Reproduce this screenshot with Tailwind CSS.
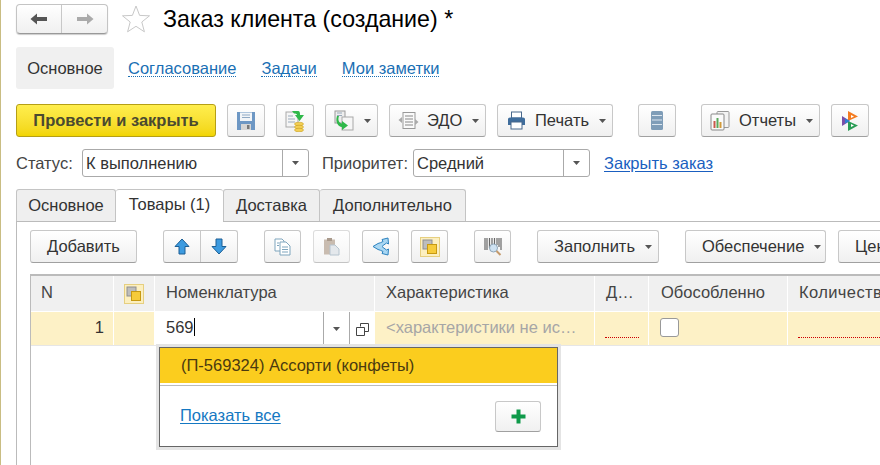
<!DOCTYPE html>
<html lang="ru">
<head>
  <meta charset="UTF-8" />
  <title>Заказ клиента (создание) *</title>
  <script src="https://cdn.jsdelivr.net/npm/@tailwindcss/browser@4"></script>
</head>
<body class="bg-white overflow-hidden">
  <div class="relative w-[880px] h-[465px] overflow-hidden border-l border-[#c9bd83] font-['Liberation_Sans',Arial,sans-serif] text-[16.5px] text-[#333]">

    <!-- header -->
    <div class="flex items-center h-[30px] mt-[4px] ml-[15px]">
      <div class="flex w-[92px] h-[30px] rounded-[4px] border border-[#c4c4c4] border-b-[#999] bg-linear-to-b from-white to-[#f0f0f0] shadow-[0_1px_1px_#ccc]">
        <div class="w-[45px] flex items-center justify-center border-r border-[#c8c8c8]">
          <svg width="18" height="14" viewBox="0 0 18 14"><path d="M0.500 7 L7 1.500 V5 H17 V9 H7 V12.500 Z" fill="#555"/></svg>
        </div>
        <div class="flex-1 flex items-center justify-center">
          <svg width="18" height="14" viewBox="0 0 18 14"><path d="M17.500 7 L11 1.500 V5 H1 V9 H11 V12.500 Z" fill="#aaa"/></svg>
        </div>
      </div>
      <svg class="ml-[13px]" width="30" height="30" viewBox="0 0 30 30"><path d="M15 2 L18.600 11.400 L28.500 11.800 L20.800 18 L23.400 27.800 L15 22.300 L6.600 27.800 L9.200 18 L1.500 11.800 L11.400 11.400 Z" fill="#fff" stroke="#c8c8c8"/></svg>
      <h1 class="ml-[12px] text-[23.2px] leading-[30px] text-black">Заказ клиента (создание) *</h1>
    </div>

    <!-- sections -->
    <div class="flex items-center h-[42px] mt-[13px] ml-[15px]">
      <div class="w-[98px] h-[42px] flex items-center justify-center rounded-[3px] bg-[#f0f0f0]">Основное</div>
      <a class="ml-[14px] text-[#1a6fb4] border-b border-dotted border-[#1a6fb4] leading-[16px]">Согласование</a>
      <a class="ml-[25px] text-[#1a6fb4] border-b border-dotted border-[#1a6fb4] leading-[16px]">Задачи</a>
      <a class="ml-[25px] text-[#1a6fb4] border-b border-dotted border-[#1a6fb4] leading-[16px]">Мои заметки</a>
    </div>

    <!-- command bar -->
    <div class="flex items-center h-[33px] mt-[15px] ml-[15px]">
      <div class="w-[200px] h-[33px] flex items-center justify-center rounded-[3px] border border-[#b59f16] bg-linear-to-b from-[#ffee4d] to-[#f2d500] font-bold text-[#4a4a30]">Провести и закрыть</div>

      <div class="ml-[11px] w-[38px] h-[33px] flex items-center justify-center rounded-[3px] border border-[#c8c8c8] border-b-[#a0a0a0] bg-linear-to-b from-white to-[#f0f0f0]">
        <svg width="20" height="20" viewBox="0 0 20 20"><path d="M1 1 H19 V19 H1 Z" fill="#6d97c4"/><rect x="4" y="1.500" width="12" height="8.500" fill="#f2f5f8"/><path d="M6 4 H14 M6 6.500 H14" stroke="#8fa9c4"/><rect x="5" y="13" width="10" height="6" fill="#d5d5d5"/><rect x="11" y="14" width="2.500" height="4" fill="#777"/></svg>
      </div>
      <div class="ml-[11px] w-[38px] h-[33px] flex items-center justify-center rounded-[3px] border border-[#c8c8c8] border-b-[#a0a0a0] bg-linear-to-b from-white to-[#f0f0f0]">
        <svg width="20" height="22" viewBox="0 0 20 22"><rect x="1" y="2" width="12" height="15" fill="#f5f5f5" stroke="#a9a9a9"/><path d="M3 6 H8 M3 9 H10 M3 12 H10" stroke="#9ab"/><path d="M7 1 H13 C15 1 15 3 15 5 H19 L14.500 11 L10 5 H12 C12 4 11 3.500 9 3.500 Z" fill="#2fb84a"/><ellipse cx="14" cy="14" rx="4.500" ry="1.800" fill="#f3cf55" stroke="#c99f20" stroke-width=".6"/><ellipse cx="14" cy="17" rx="4.500" ry="1.800" fill="#f3cf55" stroke="#c99f20" stroke-width=".6"/><ellipse cx="14" cy="20" rx="4.500" ry="1.800" fill="#f3cf55" stroke="#c99f20" stroke-width=".6"/></svg>
      </div>
      <div class="ml-[11px] w-[53px] h-[33px] flex items-center pl-[8px] gap-[9px] rounded-[3px] border border-[#c8c8c8] border-b-[#a0a0a0] bg-linear-to-b from-white to-[#f0f0f0]">
        <svg width="21" height="21" viewBox="0 0 21 21"><rect x="1" y="1" width="10" height="12" fill="#eee" stroke="#9a9a9a"/><rect x="8" y="7" width="11" height="13" fill="#f6f6f6" stroke="#a8a8a8"/><path d="M3 3 H8 M3 5.500 H8" stroke="#9ab"/><path d="M5 6 C3.500 10 5 13 8 13.500 V11 L14 15.500 L8 20 V17 C4 16.500 1 12 3 6 Z" fill="#2fb84a"/></svg>
        <svg width="7" height="4" viewBox="0 0 7 4"><path d="M0 0 H7 L3.500 4 Z" fill="#555"/></svg>
      </div>
      <div class="ml-[11px] w-[97px] h-[33px] flex items-center pl-[8px] rounded-[3px] border border-[#c8c8c8] border-b-[#a0a0a0] bg-linear-to-b from-white to-[#f0f0f0]">
        <svg width="21" height="20" viewBox="0 0 21 20"><rect x="5" y="1.500" width="12" height="16" fill="#fafafa" stroke="#999"/><path d="M7 5 H15 M7 8 H15 M7 11 H15 M7 14 H15" stroke="#888"/><path d="M0.500 9 L4 6 V12 Z M20.500 11 L17 8 V14 Z" fill="#aaa"/></svg>
        <span class="ml-[8px]">ЭДО</span>
        <svg class="ml-[10px]" width="7" height="4" viewBox="0 0 7 4"><path d="M0 0 H7 L3.500 4 Z" fill="#555"/></svg>
      </div>
      <div class="ml-[11px] w-[116px] h-[33px] flex items-center pl-[9px] rounded-[3px] border border-[#c8c8c8] border-b-[#a0a0a0] bg-linear-to-b from-white to-[#f0f0f0]">
        <svg width="19" height="19" viewBox="0 0 19 19"><rect x="4.500" y="1" width="10" height="6" fill="#fff" stroke="#48688c"/><path d="M1 8 Q1 6.500 3 6.500 H16 Q18 6.500 18 8 V14 H1 Z" fill="#3f6d9c"/><rect x="4" y="11" width="11" height="7" fill="#fff" stroke="#48688c"/></svg>
        <span class="ml-[9px]">Печать</span>
        <svg class="ml-[10px]" width="7" height="4" viewBox="0 0 7 4"><path d="M0 0 H7 L3.500 4 Z" fill="#555"/></svg>
      </div>
      <div class="ml-[25px] w-[38px] h-[33px] flex items-center justify-center rounded-[3px] border border-[#c8c8c8] border-b-[#a0a0a0] bg-linear-to-b from-white to-[#f0f0f0]">
        <svg width="12" height="19" viewBox="0 0 12 19"><rect x="0" y="0" width="12" height="19" rx="1.500" fill="#7f9db8"/><path d="M1 4.500 H11 M1 9 H11 M1 13.500 H11" stroke="#dce6ef" stroke-width="1.200"/></svg>
      </div>
      <div class="ml-[25px] w-[119px] h-[33px] flex items-center pl-[8px] rounded-[3px] border border-[#c8c8c8] border-b-[#a0a0a0] bg-linear-to-b from-white to-[#f0f0f0]">
        <svg width="20" height="20" viewBox="0 0 20 20"><rect x="7" y="0.500" width="12" height="16" rx="1" fill="#f3f3f3" stroke="#999"/><rect x="1" y="3" width="13" height="16" rx="1" fill="#fafafa" stroke="#888"/><rect x="3.500" y="10" width="2" height="7" fill="#c9584a"/><rect x="6.500" y="7" width="2" height="10" fill="#5aa85a"/><rect x="9.500" y="11" width="2" height="6" fill="#d19a3a"/></svg>
        <span class="ml-[9px]">Отчеты</span>
        <svg class="ml-[10px]" width="7" height="4" viewBox="0 0 7 4"><path d="M0 0 H7 L3.500 4 Z" fill="#555"/></svg>
      </div>
      <div class="ml-[11px] w-[38px] h-[33px] flex items-center justify-center rounded-[3px] border border-[#c8c8c8] border-b-[#a0a0a0] bg-linear-to-b from-white to-[#f0f0f0]">
        <svg width="17" height="20" viewBox="0 0 17 20"><path d="M6 0 L16 5.500 L6 10 Z" fill="#f47b20"/><path d="M0 5 L8 10 L0 15 Z" fill="#7b4fa8"/><path d="M6 10 L16 14.500 L6 20 Z" fill="#2a9d55"/><path d="M3 7.500 L8 10 L3 12.500 Z" fill="#2f7fd1"/><path d="M9 4 L12 5.500 L9 7 Z M9 13 L12 14.500 L9 16 Z" fill="#fff"/></svg>
      </div>
    </div>

    <!-- status row -->
    <div class="flex items-center h-[28px] mt-[12px] ml-[15px]">
      <span class="w-[66px] text-[#444]">Статус:</span>
      <div class="w-[227px] h-[28px] flex rounded-[3px] border border-[#aaa]">
        <span class="flex-1 pl-[3px] leading-[26px]">К выполнению</span>
        <div class="w-[26px] flex items-center justify-center border-l border-[#aaa]">
          <svg width="7" height="4" viewBox="0 0 7 4"><path d="M0 0 H7 L3.500 4 Z" fill="#555"/></svg>
        </div>
      </div>
      <span class="ml-[13px] w-[91px] text-[#444]">Приоритет:</span>
      <div class="w-[177px] h-[28px] flex rounded-[3px] border border-[#aaa]">
        <span class="flex-1 pl-[3px] leading-[26px]">Средний</span>
        <div class="w-[26px] flex items-center justify-center border-l border-[#aaa]">
          <svg width="7" height="4" viewBox="0 0 7 4"><path d="M0 0 H7 L3.500 4 Z" fill="#555"/></svg>
        </div>
      </div>
      <a class="ml-[14px] text-[#1a5fc0] underline underline-offset-2">Закрыть заказ</a>
    </div>

    <!-- page tabs -->
    <div class="flex h-[33px] mt-[12px] ml-[15px] border-b border-[#bbb]">
      <div class="w-[100px] h-[32px] flex items-center justify-center rounded-t-[3px] border border-b-0 border-[#c4c4c4] bg-[#efefef] pb-[1px]">Основное</div>
      <div class="w-[107px] h-[33px] flex items-center justify-center rounded-t-[3px] border-t border-[#c4c4c4] bg-white z-10 pb-[3px]">Товары (1)</div>
      <div class="w-[97px] h-[32px] flex items-center justify-center rounded-t-[3px] border border-b-0 border-[#c4c4c4] bg-[#efefef] pb-[1px]">Доставка</div>
      <div class="w-[146px] h-[32px] flex items-center justify-center rounded-t-[3px] border border-l-0 border-b-0 border-[#c4c4c4] bg-[#efefef] pb-[1px]">Дополнительно</div>
    </div>

    <div class="ml-[15px] h-[243px] border-l border-[#bbb] pl-[13px] overflow-hidden">
      <!-- table toolbar -->
      <div class="flex items-center h-[33px] mt-[8px] w-[1000px]">
        <div class="w-[107px] h-[33px] flex items-center justify-center rounded-[3px] border border-[#c8c8c8] border-b-[#a0a0a0] bg-linear-to-b from-white to-[#f0f0f0]">Добавить</div>
        <div class="ml-[26px] w-[75px] h-[33px] flex rounded-[3px] border border-[#c8c8c8] border-b-[#a0a0a0] bg-linear-to-b from-white to-[#f0f0f0]">
          <div class="w-[37px] flex items-center justify-center border-r border-[#c8c8c8]">
            <svg width="16" height="17" viewBox="0 0 16 17"><path d="M8 1 L15 8.500 H11 V16 H5 V8.500 H1 Z" fill="#3d9be0" stroke="#1c5f95"/></svg>
          </div>
          <div class="flex-1 flex items-center justify-center">
            <svg width="16" height="17" viewBox="0 0 16 17"><path d="M8 16 L15 8.500 H11 V1 H5 V8.500 H1 Z" fill="#3d9be0" stroke="#1c5f95"/></svg>
          </div>
        </div>
        <div class="ml-[26px] w-[37px] h-[33px] flex items-center justify-center rounded-[3px] border border-[#c8c8c8] border-b-[#a0a0a0] bg-linear-to-b from-white to-[#f0f0f0]">
          <svg width="17" height="18" viewBox="0 0 17 18"><path d="M1 1 H8 L10 3 V13 H1 Z" fill="#fff" stroke="#7fa5bd"/><path d="M6 4 H12 L16 8 V17 H6 Z" fill="#fff" stroke="#7fa5bd"/><path d="M8 9 H14 M8 11.500 H14 M8 14 H14 M3 5 H5 M3 7.500 H5" stroke="#7fa5bd"/></svg>
        </div>
        <div class="ml-[12px] w-[37px] h-[33px] flex items-center justify-center rounded-[3px] border border-[#dcdcdc] border-b-[#c4c4c4] bg-linear-to-b from-white to-[#f4f4f4]">
          <svg width="17" height="19" viewBox="0 0 17 19"><rect x="1" y="2.500" width="11" height="15" fill="#c9bcb0"/><rect x="4" y="1" width="5" height="3" fill="#a99a8c"/><path d="M7 8 H12 L16 12 V18 H7 Z" fill="#e4e8ec" stroke="#b6c4cf"/></svg>
        </div>
        <div class="ml-[12px] w-[37px] h-[33px] flex items-center justify-center rounded-[3px] border border-[#c8c8c8] border-b-[#a0a0a0] bg-linear-to-b from-white to-[#f0f0f0]">
          <svg width="18" height="19" viewBox="0 0 18 19"><path d="M1 9.500 L6 6.500 C8 6 9 5.500 11 4.500 L10 2.500 L16 1 L16.500 7 L14.500 6 C12.500 7.500 11 8.500 10 9.500 C11 10.500 12.500 11.500 14.500 13 L16.500 12 L16 18 L10 16.500 L11 14.500 C9 13.500 8 13 6 12.500 Z" fill="#a9d7f3" stroke="#2c82bf"/></svg>
        </div>
        <div class="ml-[12px] w-[37px] h-[33px] flex items-center justify-center rounded-[3px] border border-[#c8c8c8] border-b-[#a0a0a0] bg-linear-to-b from-white to-[#f0f0f0]">
          <svg width="20" height="20" viewBox="0 0 20 20"><rect x="0.500" y="0.500" width="19" height="19" fill="#fcefc0" stroke="#e6cf80"/><rect x="3" y="3" width="9" height="9" fill="#bdbdbd" stroke="#8f8f8f"/><rect x="7.500" y="7.500" width="9" height="9" fill="#f6cb3a" stroke="#c79a12"/></svg>
        </div>
        <div class="ml-[26px] w-[37px] h-[33px] flex items-center justify-center rounded-[3px] border border-[#c8c8c8] border-b-[#a0a0a0] bg-linear-to-b from-white to-[#f0f0f0]">
          <svg width="18" height="19" viewBox="0 0 18 19"><path d="M1 1 V13 M3 1 V13 M5.500 1 V11 M8 1 V8 M10.500 1 V7 M13 1 V8 M15 1 V10 M17 1 V13" stroke="#666" stroke-width="1.200"/><circle cx="9.500" cy="11" r="4" fill="#cfe2f2" stroke="#8fa6b8"/><path d="M12.500 14 L16.500 18" stroke="#c49a6c" stroke-width="2"/></svg>
        </div>
        <div class="ml-[26px] w-[122px] h-[33px] flex items-center pl-[16px] rounded-[3px] border border-[#c8c8c8] border-b-[#a0a0a0] bg-linear-to-b from-white to-[#f0f0f0]">
          <span>Заполнить</span>
          <svg class="ml-[10px]" width="7" height="4" viewBox="0 0 7 4"><path d="M0 0 H7 L3.500 4 Z" fill="#555"/></svg>
        </div>
        <div class="ml-[26px] w-[141px] h-[33px] flex items-center pl-[16px] rounded-[3px] border border-[#c8c8c8] border-b-[#a0a0a0] bg-linear-to-b from-white to-[#f0f0f0]">
          <span>Обеспечение</span>
          <svg class="ml-[10px]" width="7" height="4" viewBox="0 0 7 4"><path d="M0 0 H7 L3.500 4 Z" fill="#555"/></svg>
        </div>
        <div class="ml-[12px] w-[100px] h-[33px] flex items-center pl-[16px] rounded-[3px] border border-[#c8c8c8] border-b-[#a0a0a0] bg-linear-to-b from-white to-[#f0f0f0]">
          <span>Цены</span>
        </div>
      </div>

      <!-- table -->
      <div class="mt-[11px] border-l border-t-2 border-[#bbb] w-[851px] h-[200px]">
        <div class="grid grid-cols-[83px_41px_220px_220px_54px_139px_92px] h-[35px] bg-[#f0f0f0] text-[#444] whitespace-nowrap overflow-hidden">
          <div class="border-r border-white pl-[10px] leading-[32px]">N</div>
          <div class="border-r border-white flex items-center justify-center">
            <svg width="20" height="20" viewBox="0 0 20 20"><rect x="0.500" y="0.500" width="19" height="19" fill="#fcefc0" stroke="#e6cf80"/><rect x="3" y="3" width="9" height="9" fill="#bdbdbd" stroke="#8f8f8f"/><rect x="7.500" y="7.500" width="9" height="9" fill="#f6cb3a" stroke="#c79a12"/></svg>
          </div>
          <div class="border-r border-white pl-[11px] leading-[32px]">Номенклатура</div>
          <div class="border-r border-white pl-[11px] leading-[32px]">Характеристика</div>
          <div class="border-r border-white pl-[11px] leading-[32px]">Д…</div>
          <div class="border-r border-white pl-[12px] leading-[32px]">Обособленно</div>
          <div class="pl-[11px] leading-[32px] overflow-hidden tracking-[0.4px]">Количество</div>
        </div>
        <div class="grid grid-cols-[83px_41px_220px_220px_54px_139px_92px] h-[34px] mt-[1px] bg-[#fdf1c6] border-b border-[#e6e6e6] whitespace-nowrap overflow-hidden">
          <div class="border-r border-white pr-[9px] text-right leading-[31px]">1</div>
          <div class="border-r border-white"></div>
          <div class="flex bg-white h-[34px]">
            <span class="flex-1 pl-[11px] leading-[31px]"><span class="border-r border-black">569</span></span>
            <div class="w-[26px] flex items-center justify-center border-l border-[#aaa]">
              <svg width="7" height="4" viewBox="0 0 7 4"><path d="M0 0 H7 L3.500 4 Z" fill="#555"/></svg>
            </div>
            <div class="w-[26px] flex items-center justify-center border-l border-[#aaa]">
              <svg width="13" height="13" viewBox="0 0 13 13"><path d="M4.500 3.500 V0.500 H12.500 V8.500 H8.500 M0.500 4.500 H8.500 V12.500 H0.500 Z" fill="none" stroke="#444"/></svg>
            </div>
          </div>
          <div class="border-r border-white pl-[11px] leading-[31px] text-[#a6a6a6] overflow-hidden">&lt;характеристики не ис…</div>
          <div class="border-r border-white pt-[25px] pl-[10px]"><div class="w-[34px] border-b border-dotted border-[#c00]"></div></div>
          <div class="border-r border-white pl-[11px] pt-[6px]"><div class="w-[19px] h-[19px] rounded-[3px] border border-[#999] bg-white"></div></div>
          <div class="pt-[25px] pl-[10px]"><div class="w-[90px] border-b border-dotted border-[#c00]"></div></div>
        </div>
      </div>
    </div>

    <!-- autocomplete popup -->
    <div class="absolute left-[158px] top-[347px] w-[399px] h-[100px] border border-[#666] bg-white shadow-[0_0_0_3px_#e4e4e4]">
      <div class="h-[35px] pl-[21px] bg-[#fbcd1e] leading-[34px] text-[#4a3a10]">(П-569324) Ассорти (конфеты)</div>
      <div class="mt-[2px] h-[61px] border-t border-[#bbb] flex items-center justify-between pl-[20px] pr-[16px]">
        <a class="text-[#1578c2] underline underline-offset-2 mb-[2px]">Показать все</a>
        <div class="w-[46px] h-[31px] flex items-center justify-center rounded-[3px] border border-[#c8c8c8] border-b-[#a0a0a0] bg-linear-to-b from-white to-[#f0f0f0]">
          <svg width="15" height="15" viewBox="0 0 15 15"><path d="M5.500 0.500 H9.500 V5.500 H14.500 V9.500 H9.500 V14.500 H5.500 V9.500 H0.500 V5.500 H5.500 Z" fill="#0f9a4a"/></svg>
        </div>
      </div>
    </div>
  </div>
</body>
</html>
